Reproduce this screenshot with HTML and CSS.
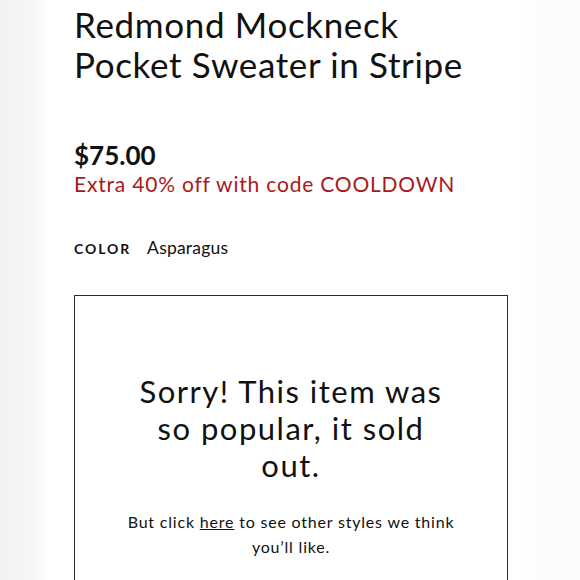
FILE: index.html
```html
<!DOCTYPE html>
<html>
<head>
<meta charset="utf-8">
<link rel="stylesheet" href="styles.css">
</head>
<body>
<main class="page">
  <h1 class="title">Redmond Mockneck<br>Pocket Sweater in Stripe</h1>
  <div class="price">$75.00</div>
  <div class="promo">Extra 40% off with code COOLDOWN</div>
  <div class="color"><span class="color-label">COLOR</span><span class="color-value">Asparagus</span></div>
  <section class="soldout">
    <p class="soldout-title">Sorry! This item was so popular, it sold out.</p>
    <p class="soldout-text">But click <a href="#" class="link">here</a> to see other styles we think you’ll like.</p>
  </section>
</main>
</body>
</html>
```
FILE: styles.css
```css
html, body {
  margin: 0;
  padding: 0;
  height: 100%;
  overflow: hidden;
}
body {
  background: linear-gradient(to right, #f3f2f2 0px, #f7f6f6 30px, #fbfafa 44px, #ffffff 48px, #ffffff 520px, #fcfbfb 545px, #fcfbfb 580px);
  font-family: Lato, "Open Sans", sans-serif;
  color: #111;
}
.page {
  padding: 4px 0 0 74px;
  width: 434px;
}
.title {
  margin: 0;
  font-weight: 400;
  font-size: 35px;
  line-height: 40px;
  letter-spacing: 0.65px;
}
.price {
  margin-top: 56px;
  font-weight: 700;
  font-size: 26px;
  line-height: 30px;
}
.promo {
  color: #a8191c;
  font-size: 21px;
  line-height: 28px;
  letter-spacing: 0.8px;
}
.color {
  margin-top: 39px;
  display: flex;
  align-items: baseline;
  gap: 16px;
}
.color-label {
  font-weight: 700;
  font-size: 14px;
  letter-spacing: 1.9px;
}
.color-value {
  font-size: 17.5px;
  letter-spacing: 0.2px;
}
.soldout {
  margin-top: 37px;
  border: 1.5px solid #2b2b2b;
  border-bottom: none;
  height: 320px;
  box-sizing: border-box;
  padding: 77px 30px 0;
  text-align: center;
}
.soldout-title {
  margin: 0 auto;
  max-width: 315px;
  font-size: 31px;
  line-height: 37px;
  letter-spacing: 1.5px;
}
.soldout-text {
  margin: 25px auto 0;
  max-width: 330px;
  font-size: 16px;
  line-height: 25px;
  letter-spacing: 0.8px;
}
.link {
  color: inherit;
  text-decoration: underline;
}
```
